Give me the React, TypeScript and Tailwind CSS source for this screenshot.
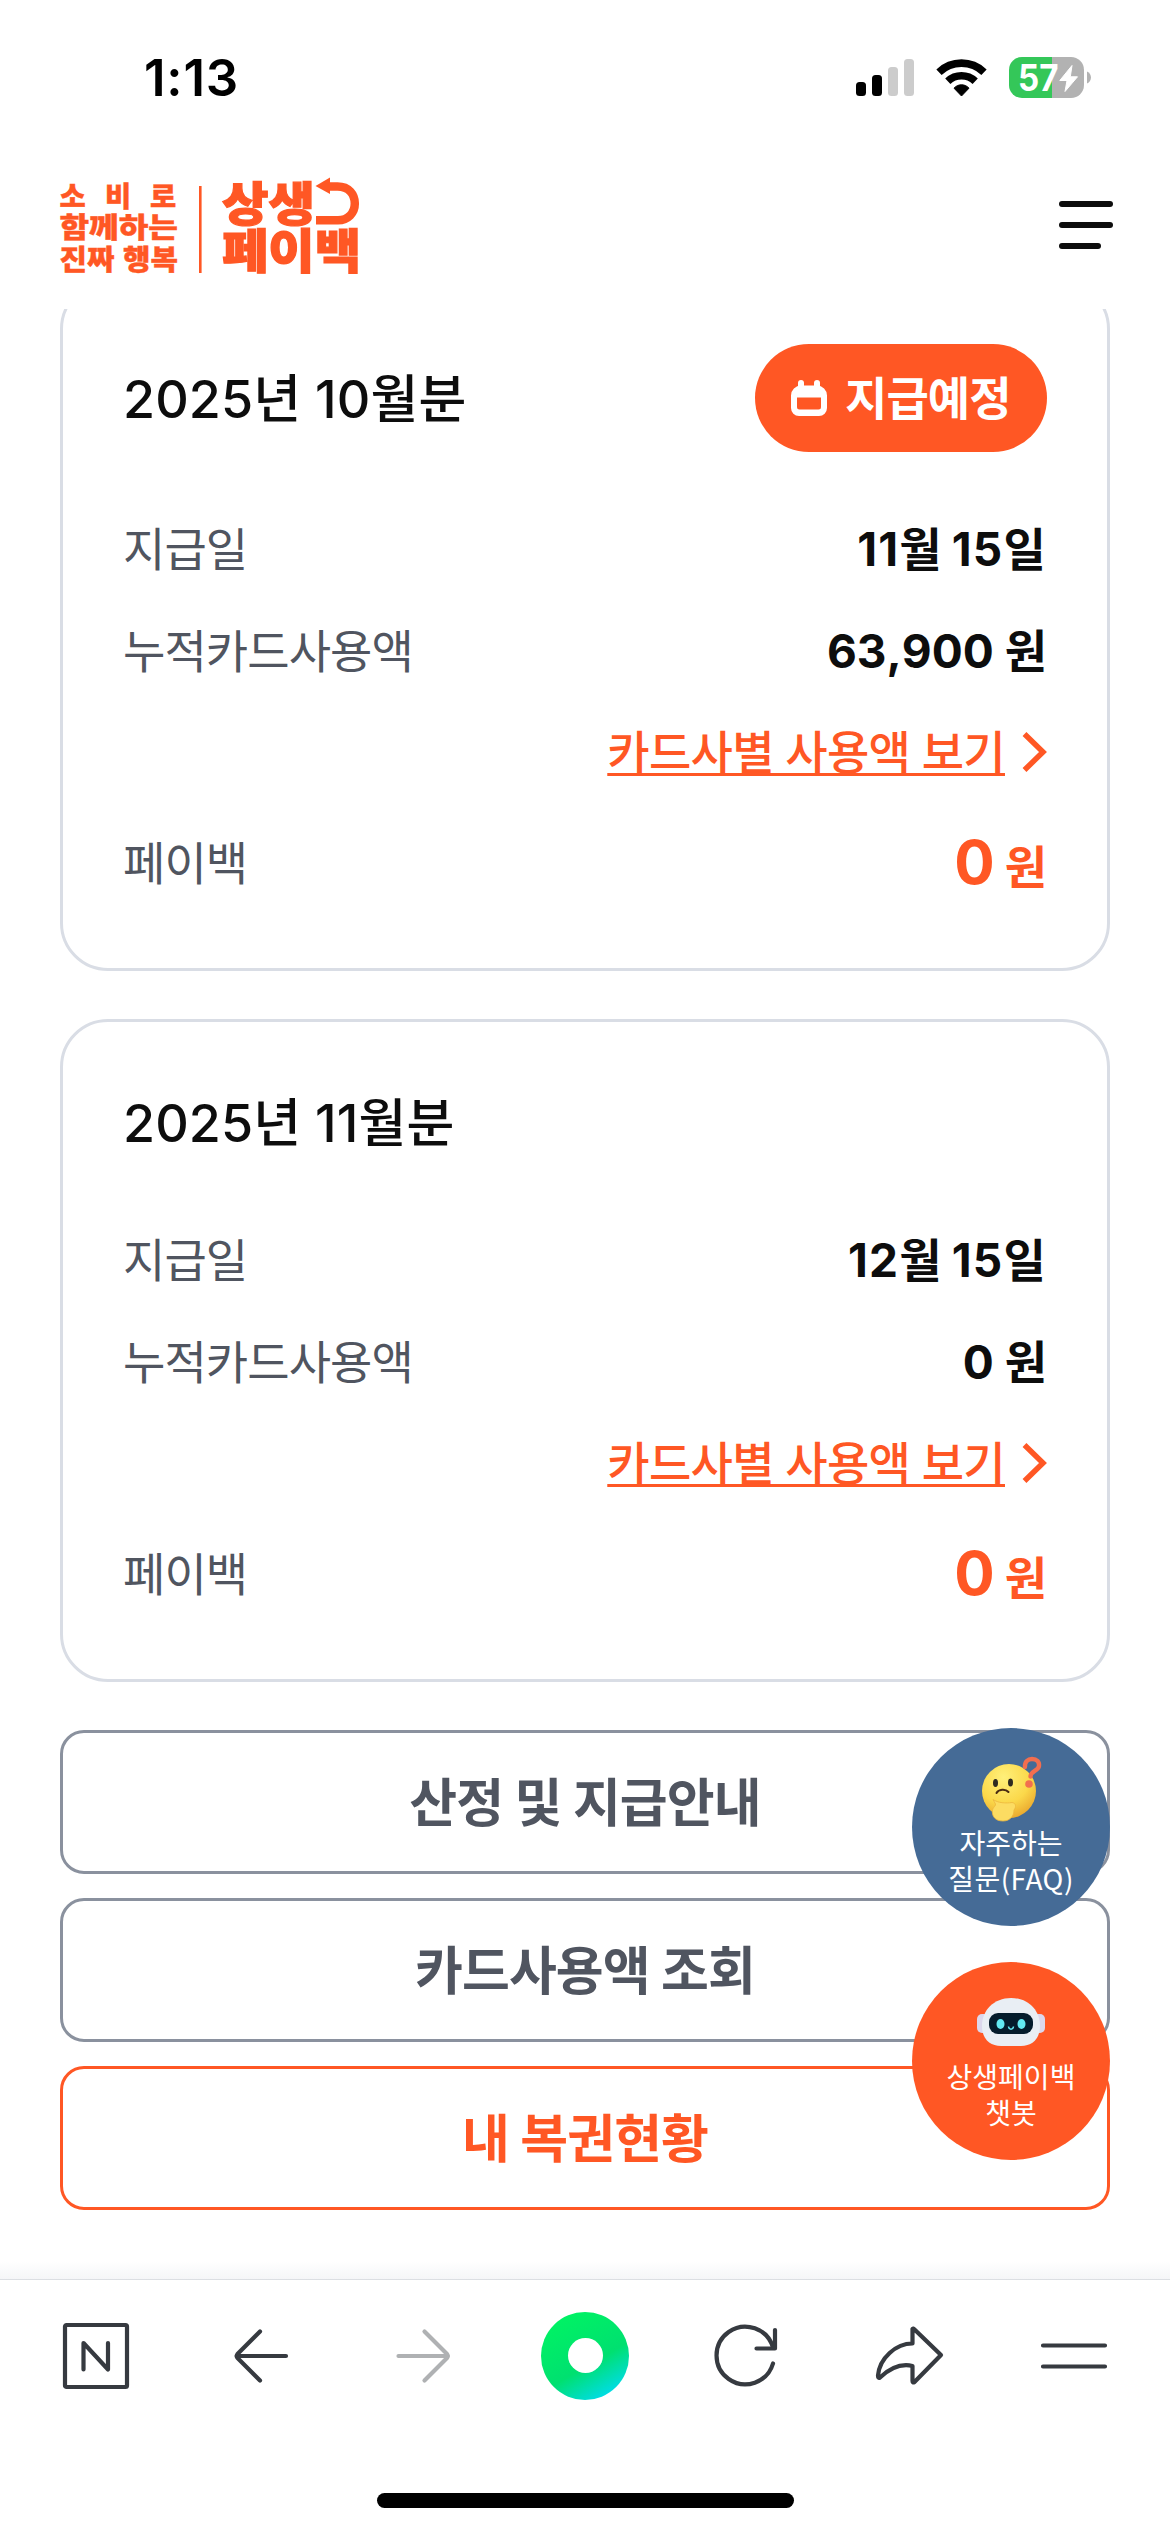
const payments = [
    { title: '2025년 10월분', date: '11월 15일', used: '63,900', payback: '0', scheduled: true },
    { title: '2025년 11월분', date: '12월 15일', used: '0', payback: '0', scheduled: false },
]

function StatusBar() {
    return (
        <div className="flex h-[148px] shrink-0 items-start justify-between pl-[144px] pr-[78px]">
            <span className="mt-[48px] text-[51px] font-semibold leading-[60px] tracking-[0.8px] text-black">1:13</span>
            <svg className="mt-[50px]" width="236" height="56" viewBox="856 50 236 56">
                <rect x="856" y="82" width="10" height="14" rx="3.5" fill="#000" />
                <rect x="872" y="75" width="10" height="21" rx="3.5" fill="#000" />
                <rect x="888" y="67" width="10" height="29" rx="3.5" fill="#ccc" />
                <rect x="904" y="59" width="10" height="37" rx="3.5" fill="#ccc" />
                <g fill="none" stroke="#000" strokeWidth="7.6">
                    <path d="M939 72.2A32.5 32.5 0 0 1 984 72.2" />
                    <path d="M947.8 81.2A20 20 0 0 1 975.2 81.2" />
                </g>
                <path d="M961.5 96L954 88.2C958 83.6 965 83.6 969 88.2Z" fill="#000" stroke="#000" strokeLinejoin="round" />
                <clipPath id="battery">
                    <rect x="1009" y="57" width="75" height="41" rx="13" />
                </clipPath>
                <g clipPath="url(#battery)">
                    <rect x="1009" y="57" width="43" height="41" fill="#34c759" />
                    <rect x="1052" y="57" width="32" height="41" fill="#b2b2b2" />
                </g>
                <path d="M1087 71.5C1092.3 73.5 1092.3 81.5 1087 83.5Z" fill="#b2b2b2" />
                <text x="1018" y="91" fontSize="37" fontWeight="700" fill="#fff" textLength="40.5" lengthAdjust="spacingAndGlyphs">57</text>
                <path d="M1072 65.5L1059.8 80.5H1067L1065 91.5L1077.5 76.8H1070.3Z" fill="#fff" stroke="#fff" strokeLinejoin="round" />
            </svg>
        </div>
    )
}

function Logo() {
    return (
        <svg width="302" height="100" viewBox="59 176 302 100" fill="#ff5724" stroke="#ff5724" className="overflow-visible font-['Noto_Sans_CJK_KR',sans-serif] font-black">
            <g fontSize="28.5" strokeWidth="0.4">
                <text x="59.5" y="206.5">소</text>
                <text x="105" y="206.5">비</text>
                <text x="150" y="206.5">로</text>
                <text x="59.5" y="238.3" textLength="118.5" lengthAdjust="spacingAndGlyphs">함께하는</text>
                <text x="59.5" y="270" textLength="55" lengthAdjust="spacingAndGlyphs">진짜</text>
                <text x="123" y="270" textLength="55" lengthAdjust="spacingAndGlyphs">행복</text>
            </g>
            <path d="M200.3 186V273" strokeWidth="2.6" />
            <g fontSize="47" strokeWidth="1.2">
                <text x="222" y="220.5" textLength="93" lengthAdjust="spacingAndGlyphs">상생</text>
                <text x="222" y="268" textLength="139" lengthAdjust="spacingAndGlyphs">페이백</text>
            </g>
            <path d="M328 186.5H337.5C349 186.5 354.8 194.5 354.8 203.5C354.8 213 348 220.2 338 220.2H316" fill="none" strokeWidth="8.5" />
            <path d="M315.5 186L330 177.5V194Z" stroke="none" />
        </svg>
    )
}

function CalendarIcon() {
    return (
        <svg width="36" height="36" viewBox="0 0 36 36" fill="#fff">
            <rect x="7" y="0" width="6" height="12" rx="3" />
            <rect x="23" y="0" width="6" height="12" rx="3" />
            <path fillRule="evenodd" d="M10 5.5H26A10 10 0 0 1 36 15.5V28A8 8 0 0 1 28 36H8A8 8 0 0 1 0 28V15.5A10 10 0 0 1 10 5.5ZM6 17.5V27A2.5 2.5 0 0 0 8.5 29.5H27.5A2.5 2.5 0 0 0 30 27V17.5Z" />
        </svg>
    )
}

function PaymentCard({ item }: { item: (typeof payments)[number] }) {
    return (
        <section className="rounded-[48px] border-[3px] border-[#d9dde5] p-[60px] text-[46px] leading-[74px] tracking-[-0.9px] [font-kerning:none]">
            <div className="mb-[60px] flex items-center justify-between">
                <h2 className="h-[81px] text-[52px] font-medium leading-[83px] tracking-[0.1px] text-[#0d0d0d]">{item.title}</h2>
                {item.scheduled && (
                    <span className="flex h-[108px] w-[292px] items-center gap-[18px] rounded-full bg-[#ff5724] pl-[36px] font-bold leading-[76px] text-white">
                        <CalendarIcon />
                        지급예정
                    </span>
                )}
            </div>
            <dl className="flex flex-col gap-[30px]">
                <div className="flex h-[72px] justify-between">
                    <dt className="text-[#505560]">지급일</dt>
                    <dd className="font-bold tracking-[1.2px] text-[#0d0d0d] [word-spacing:-3px]">{item.date}</dd>
                </div>
                <div className="flex h-[72px] justify-between">
                    <dt className="text-[#505560]">누적카드사용액</dt>
                    <dd className="font-bold tracking-normal text-[#0d0d0d]">{item.used} 원</dd>
                </div>
                <div className="flex h-[72px] items-center justify-end gap-[16px] text-[#ff5724]">
                    <a className="font-medium tracking-[-0.7px] underline decoration-[3px] underline-offset-[4px]">카드사별 사용액 보기</a>
                    <svg width="26" height="40" viewBox="0 0 26 40" fill="none" stroke="#ff5724" strokeWidth="5.5">
                        <path d="M3.5 2L22 20L3.5 38" />
                    </svg>
                </div>
                <div className="flex h-[90px] items-center justify-between">
                    <dt className="text-[#505560]">페이백</dt>
                    <dd className="pt-[3px] font-bold tracking-normal text-[#ff5724] [word-spacing:-1px]">
                        <span className="text-[60px]">{item.payback}</span> 원
                    </dd>
                </div>
            </dl>
        </section>
    )
}

function ThinkingFace() {
    return (
        <svg className="absolute left-[69px] top-[28px]" width="62" height="66" viewBox="0 0 62 66">
            <defs>
                <radialGradient id="face" cx="0.4" cy="0.25" r="0.8">
                    <stop offset="0" stopColor="#fff07a" />
                    <stop offset="0.6" stopColor="#fbd84a" />
                    <stop offset="1" stopColor="#e9a52c" />
                </radialGradient>
            </defs>
            <circle cx="28" cy="35" r="27" fill="url(#face)" />
            <ellipse cx="14.5" cy="27" rx="2.5" ry="4" fill="#2e2a20" />
            <ellipse cx="29.5" cy="26.5" rx="2.5" ry="4" fill="#2e2a20" />
            <path d="M15.5 37C17.5 33 24.5 32.5 27.5 36" fill="none" stroke="#4a2b12" strokeWidth="2" strokeLinecap="round" />
            <path d="M12 43.5C17 47 25 47.5 31 46.5C35 47 35.5 51 33 54C33 60 29 65 22 65C14 65 10.5 60 11.5 54C12 51 15 50 14.5 48Z" fill="#fcdc62" stroke="#eeb63c" strokeWidth="0.8" />
            <path d="M44 11C43.5 5.5 47 3 51 3C56 3 58.5 6 58 10C57.5 15 50 14.5 49.5 20.5" fill="none" stroke="#f26e4f" strokeWidth="4.4" strokeLinecap="round" />
            <circle cx="48" cy="28" r="3.8" fill="#f26e4f" />
        </svg>
    )
}

function RobotFace() {
    return (
        <svg className="absolute left-[64px] top-[36px]" width="70" height="49" viewBox="0 0 70 49">
            <rect x="1" y="16" width="12" height="19" rx="5" fill="#dcd7ec" />
            <rect x="57" y="16" width="12" height="19" rx="5" fill="#dcd7ec" />
            <path d="M35 0C52 0 64 12 64 28C64 41 56 48 45 48H25C14 48 6 41 6 28C6 12 18 0 35 0Z" fill="#e9eef4" />
            <rect x="13" y="15" width="44" height="21" rx="9" fill="#051c2c" />
            <ellipse cx="24.5" cy="26" rx="4" ry="5" fill="#62e9f2" />
            <ellipse cx="45.5" cy="26" rx="4" ry="5" fill="#62e9f2" />
            <path d="M32.5 28.5C33 32 37 32 37.5 28.5" fill="none" stroke="#62e9f2" strokeWidth="1.5" />
        </svg>
    )
}

function Toolbar() {
    return (
        <nav className="h-[253px] shrink-0 border-t border-[#dcdfe3] bg-white">
            <div className="flex h-[151px] items-center justify-between px-[60px]">
                <svg width="72" height="72" viewBox="0 0 72 72" fill="none" stroke="#363a40" strokeWidth="4.2" strokeLinecap="round" strokeLinejoin="round">
                    <rect x="5" y="5" width="62" height="62" rx="1.5" />
                    <path d="M23.5 49.5V23L48 49.5V23" />
                </svg>
                <svg width="72" height="72" viewBox="0 0 72 72" fill="none" stroke="#363a40" strokeWidth="4.2" strokeLinecap="round" strokeLinejoin="round">
                    <path d="M37 11.5L14.5 34Q13 36 14.5 38L37 60.5M13.5 36H63" />
                </svg>
                <svg width="72" height="72" viewBox="0 0 72 72" fill="none" stroke="#afb1b3" strokeWidth="4.2" strokeLinecap="round" strokeLinejoin="round">
                    <path d="M38.5 11.5L61 34Q62.5 36 61 38L38.5 60.5M62 36H12.5" />
                </svg>
                <div className="-mx-[8px] flex size-[88px] items-center justify-center rounded-full bg-[linear-gradient(150deg,#00f562_5%,#00e070_58%,#00dce8_88%)]">
                    <div className="size-[35px] rounded-full bg-white" />
                </div>
                <svg width="72" height="72" viewBox="0 0 72 72" fill="none" stroke="#363a40" strokeWidth="4.2" strokeLinecap="round" strokeLinejoin="round">
                    <path d="M61 43.5A28.8 28.8 0 1 1 61 27.5" />
                    <path d="M63 10V28.5H44.5" />
                </svg>
                <svg width="72" height="72" viewBox="0 0 72 72" fill="none" stroke="#363a40" strokeWidth="4.2" strokeLinecap="round" strokeLinejoin="round">
                    <path d="M37.5 9Q38 8 39.5 9.5L66 35L39.5 62Q37.5 63 37.5 61V46C25 43 13 50 5 57.5Q3 58.5 3 55.5C4.5 38 21 23.5 37.5 23.5Z" />
                </svg>
                <svg width="72" height="72" viewBox="0 0 72 72" fill="none" stroke="#363a40" strokeWidth="4.2" strokeLinecap="round">
                    <path d="M5 25.5H67M5 46.5H67" />
                </svg>
            </div>
            <div className="mx-auto mt-[62px] h-[15px] w-[417px] rounded-full bg-black" />
        </nav>
    )
}

export default function App() {
    return (
        <div className="flex h-[2532px] w-[1170px] flex-col overflow-hidden bg-white font-['Inter','Noto_Sans_CJK_KR',sans-serif]">
            <StatusBar />
            <header className="flex h-[161px] shrink-0 items-start justify-between pl-[59px] pr-[57px] pt-[28px]">
                <Logo />
                <button className="mt-[25px] flex flex-col gap-[15px]">
                    <span className="h-[6px] w-[54px] rounded-full bg-[#0d0d0d]" />
                    <span className="h-[6px] w-[54px] rounded-full bg-[#0d0d0d]" />
                    <span className="h-[6px] w-[42px] rounded-full bg-[#0d0d0d]" />
                </button>
            </header>
            <main className="relative h-[1970px] shrink-0 overflow-hidden px-[60px]">
                <div className="mt-[-28px] flex flex-col gap-[48px]">
                    {payments.map((item) => (
                        <PaymentCard key={item.title} item={item} />
                    ))}
                    <div className="flex flex-col gap-[24px] text-[52px] font-bold tracking-[-0.9px]">
                        <button className="h-[144px] rounded-[24px] border-[3px] border-[#8a919e] pt-[3px] text-[#505560]">산정 및 지급안내</button>
                        <button className="h-[144px] rounded-[24px] border-[3px] border-[#8a919e] pt-[3px] text-[#505560]">카드사용액 조회</button>
                        <button className="h-[144px] rounded-[24px] border-[3px] border-[#ff5724] pt-[3px] text-[#ff5724]">내 복권현황</button>
                    </div>
                </div>
                <div className="absolute inset-x-0 bottom-0 h-[18px] bg-gradient-to-b from-white to-[#f5f6f8]" />

                {/* floating shortcuts */}
                <div className="absolute right-[60px] top-[1419px] flex flex-col gap-[36px] text-center font-['Noto_Sans_CJK_KR',sans-serif] text-[28px] leading-[36px] text-white">
                    <a className="relative size-[198px] rounded-full bg-[#456b96] pt-[96px]">
                        <ThinkingFace />
                        자주하는
                        <br />
                        <span className="tracking-[0.5px]">질문(FAQ)</span>
                    </a>
                    <a className="relative size-[198px] rounded-full bg-[#ff5724] pt-[96px]">
                        <RobotFace />
                        상생페이백
                        <br />
                        챗봇
                    </a>
                </div>
            </main>
            <Toolbar />
        </div>
    )
}
